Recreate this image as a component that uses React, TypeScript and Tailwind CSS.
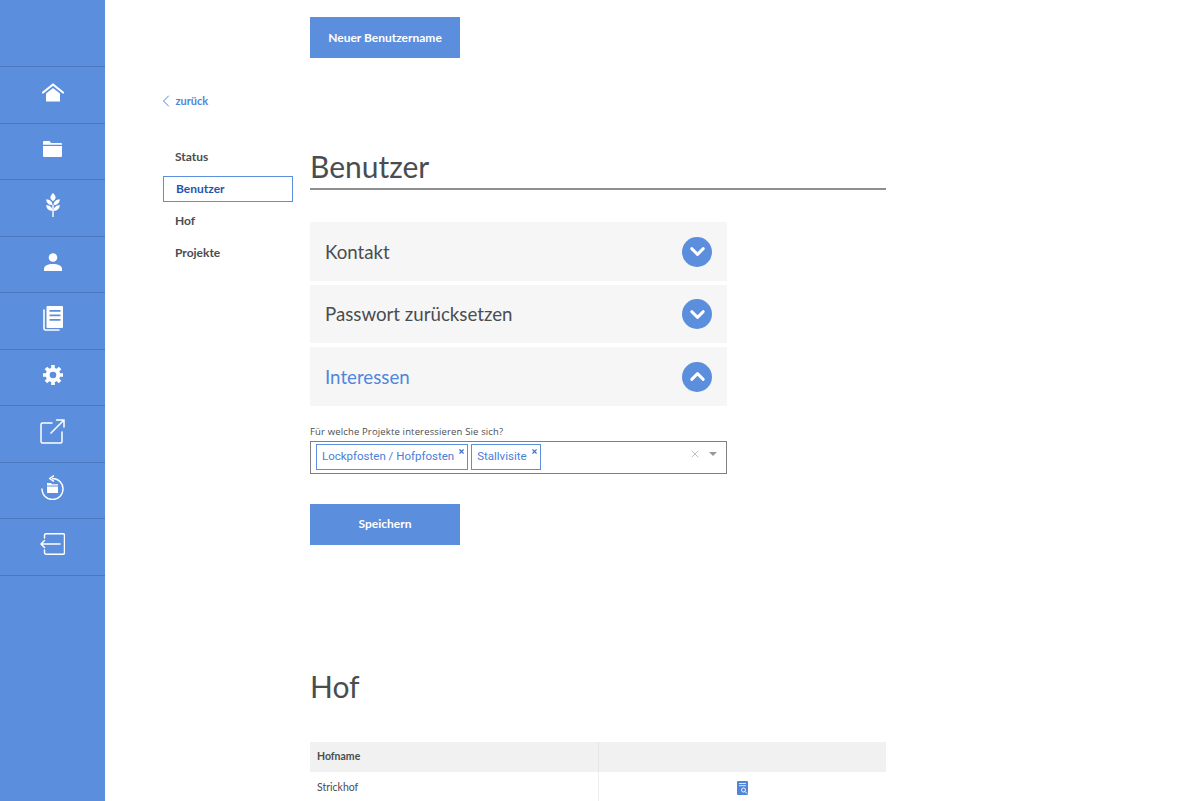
import { ChevronDown, ChevronLeft, ChevronUp, X } from "lucide-react";

function HomeIcon() {
  return (
    <svg width="22" height="19" viewBox="0 0 22 19" fill="none">
      <path d="M1 9.500 11 1.500l10 8" stroke="white" strokeWidth="2.200" strokeLinejoin="round" strokeLinecap="round" />
      <path d="M4 10.500 11 5l7 5.500V18.500H4z" fill="white" />
    </svg>
  );
}

function FolderIcon() {
  return (
    <svg width="19" height="16" viewBox="0 0 19 16" fill="white">
      <path d="M1 0h5.500l1.600 2H18a1 1 0 0 1 1 1v.8H0V1a1 1 0 0 1 1-1z" />
      <path d="M0 5h19v10a1 1 0 0 1-1 1H1a1 1 0 0 1-1-1z" />
    </svg>
  );
}

function WheatIcon() {
  return (
    <svg width="14" height="24" viewBox="0 0 14 24" fill="white">
      <path d="M7 0c1.800 1.700 2.600 3.200 2.600 4.500 0 1.400-1.100 2.600-2.600 3.700-1.500-1.100-2.600-2.300-2.600-3.700C4.400 3.200 5.200 1.700 7 0z" />
      <path d="M.2 6.200c3.600.3 6.300 2.200 6.300 6-3.800-.1-6.200-2.300-6.300-6z" />
      <path d="M13.800 6.200c-3.600.3-6.300 2.200-6.300 6 3.800-.1 6.200-2.300 6.300-6z" />
      <path d="M.2 12c3.600.3 6.300 2.200 6.300 6-3.800-.1-6.200-2.300-6.300-6z" />
      <path d="M13.800 12c-3.600.3-6.300 2.200-6.300 6 3.800-.1 6.200-2.300 6.300-6z" />
      <rect x="6.300" y="12" width="1.400" height="12" />
    </svg>
  );
}

function UserIcon() {
  return (
    <svg width="18" height="18" viewBox="0 0 18 18" fill="white">
      <circle cx="9" cy="4.500" r="4.300" />
      <path d="M0 18v-2.200C0 12.800 4 11 9 11s9 1.800 9 4.800V18z" />
    </svg>
  );
}

function NewsIcon() {
  return (
    <svg width="20" height="25" viewBox="0 0 20 25" fill="none">
      <path d="M1 4v18.500A1.500 1.500 0 0 0 2.500 24H16" stroke="white" strokeWidth="1.600" strokeLinecap="round" />
      <path
        fillRule="evenodd"
        clipRule="evenodd"
        fill="white"
        d="M4.500 0H19a1 1 0 0 1 1 1v20a1 1 0 0 1-1 1H4.500a1 1 0 0 1-1-1V1a1 1 0 0 1 1-1zM6.500 4v1.800h11V4zM6.500 8.500v1.800h11V8.500zM6.500 13v1.800h11V13z"
      />
    </svg>
  );
}

function GearIcon() {
  return (
    <svg width="20" height="20" viewBox="0 0 20 20" fill="none">
      <circle cx="10" cy="10" r="5.300" stroke="white" strokeWidth="4" />
      <path
        d="M10 0v20M0 10h20M2.900 2.900l14.200 14.200M17.100 2.900 2.900 17.100"
        stroke="white"
        strokeWidth="3.600"
        strokeDasharray="3.500 13"
      />
    </svg>
  );
}

function ExternalIcon() {
  return (
    <svg width="25" height="25" viewBox="0 0 25 25" fill="none" stroke="white" strokeWidth="1.500" strokeLinecap="round">
      <path d="M12 4H2.500A1.500 1.500 0 0 0 1 5.500v17A1.500 1.500 0 0 0 2.500 24h18a1.500 1.500 0 0 0 1.500-1.500V13" />
      <path d="M11 14 24 1M16.500 1H24v7" />
    </svg>
  );
}

function UndoFolderIcon() {
  return (
    <svg width="23" height="25" viewBox="0 0 23 25" fill="none">
      <path d="M11.500 3.500A10.500 10.500 0 1 1 1 14" stroke="white" strokeWidth="1.400" strokeLinecap="round" />
      <path d="M12.500.8 8.500 3.500l4 2.700" stroke="white" strokeWidth="1.400" strokeLinecap="round" strokeLinejoin="round" />
      <path d="M6 8h4l1 1.300h6v1.200H6z" fill="white" />
      <path d="M6 11.500h11V18H6z" fill="white" />
    </svg>
  );
}

function ExitIcon() {
  return (
    <svg width="25" height="22" viewBox="0 0 25 22" fill="none" stroke="white" strokeWidth="1.500" strokeLinecap="round" strokeLinejoin="round">
      <path d="M4.500 5V2.200A1.500 1.500 0 0 1 6 .8h17A1.500 1.500 0 0 1 24.500 2.200v17.600a1.500 1.500 0 0 1-1.500 1.400H6a1.500 1.500 0 0 1-1.500-1.400V17" />
      <path d="M20 11H1M4.500 7.500 1 11l3.500 3.500" />
    </svg>
  );
}

function ReportIcon() {
  return (
    <svg width="11" height="14" viewBox="0 0 11 14">
      <rect width="11" height="14" rx="1" fill="#4f86dc" />
      <path d="M2 2.500h7M2 4.700h7" stroke="white" strokeWidth="0.800" />
      <circle cx="6.500" cy="9" r="2" fill="none" stroke="white" strokeWidth="0.900" />
      <path d="M8 10.500 10 12.500" stroke="white" strokeWidth="1" />
    </svg>
  );
}

const navIcons = [
  <HomeIcon />,
  <FolderIcon />,
  <WheatIcon />,
  <UserIcon />,
  <NewsIcon />,
  <GearIcon />,
  <ExternalIcon />,
  <UndoFolderIcon />,
  <ExitIcon />,
];

function Accordion({ title, open }: { title: string; open?: boolean }) {
  return (
    <div className="flex h-[58.500px] items-center justify-between bg-[#f6f6f6] px-[15px] pt-[1px]">
      <span className={`text-[18.700px] ${open ? "text-[#4f86dc]" : "text-[#4a4d50]"}`}>{title}</span>
      <span className="flex h-[30px] w-[30px] items-center justify-center rounded-full bg-[#5b8edd] text-white">
        {open ? <ChevronUp size={23} strokeWidth={3} /> : <ChevronDown size={23} strokeWidth={3} />}
      </span>
    </div>
  );
}

function Tag({ label }: { label: string }) {
  return (
    <span className="relative flex h-[26px] items-center border border-[#5b8edd] pl-[5px] pr-[13px] font-['Roboto',sans-serif] text-[11.500px] text-[#4a80d8]">
      {label}
      <X size={7} strokeWidth={4} className="absolute right-[2px] top-[3px] text-[#3f74cf]" />
    </span>
  );
}

export default function App() {
  return (
    <div className="flex h-[801px] overflow-hidden bg-white font-['Lato',sans-serif] text-[#4a4d50]">
      <aside className="w-[105px] shrink-0 bg-[#5b8edd] pt-[66px]">
        {navIcons.map((icon, i) => (
          <div
            key={i}
            className="flex h-[56.500px] items-center justify-center border-t border-[#4a78bf] pb-[5px]"
          >
            {icon}
          </div>
        ))}
        <div className="border-t border-[#4a78bf]" />
      </aside>

      <nav className="ml-[58px] w-[130px] shrink-0 pt-[94px]">
        <a className="flex h-[14px] items-center text-[11px] font-bold text-[#4f86dc]">
          <ChevronLeft size={20} strokeWidth={1.200} className="-ml-[7.500px]" />
          zurück
        </a>
        <div className="mt-[36px] flex flex-col gap-[6px] text-[12px] font-bold">
          <div className="flex h-[26px] items-center pl-[12px]">Status</div>
          <div className="flex h-[26px] items-center border border-[#5b8edd] pl-[12px] text-[#1f56ae]">Benutzer</div>
          <div className="flex h-[26px] items-center pl-[12px]">Hof</div>
          <div className="flex h-[26px] items-center pl-[12px]">Projekte</div>
        </div>
      </nav>

      <main className="ml-[17px] w-[576px] shrink-0 pt-[17px]">
        <button className="h-[41px] w-[150px] bg-[#5b8edd] text-[12px] font-bold text-white">Neuer Benutzername</button>

        <h1 className="mt-[88px] border-b-2 border-[#8f8f8f] pb-[2px] text-[30px] leading-[40px]">Benutzer</h1>

        <div className="mt-[32px] flex w-[417px] flex-col gap-[4px]">
          <Accordion title="Kontakt" />
          <Accordion title="Passwort zurücksetzen" />
          <Accordion title="Interessen" open />
        </div>

        <label className="mt-[19px] block font-['Open_Sans',sans-serif] text-[9.500px] leading-[14px] tracking-[0.15px]">
          Für welche Projekte interessieren Sie sich?
        </label>
        <div className="mt-[2px] flex h-[33px] w-[417px] items-center gap-[3px] border border-[#808080] pl-[5px] pr-[9px]">
          <Tag label="Lockpfosten / Hofpfosten" />
          <Tag label="Stallvisite" />
          <X size={12} strokeWidth={1.300} className="mb-[6px] ml-auto text-[#9a9a9a]" />
          <span className="mb-[6px] ml-[5px] h-0 w-0 border-x-[4px] border-t-[4px] border-x-transparent border-t-[#999999]" />
        </div>

        <button className="mt-[30px] block h-[41px] w-[150px] bg-[#5b8edd] text-[12px] font-bold text-white">Speichern</button>

        <h2 className="mt-[121px] text-[30px] leading-[40px]">Hof</h2>

        <div className="mt-[36px] grid grid-cols-[289px_287px] text-[10.500px]">
          <div className="flex h-[30px] items-center border-r border-[#e6e6e6] bg-[#f1f1f1] pl-[7px] pt-[1px] font-bold">Hofname</div>
          <div className="bg-[#f1f1f1]" />
          <div className="flex h-[32px] items-center border-r border-[#eeeeee] pl-[7px] pt-[1px]">Strickhof</div>
          <div className="flex items-center justify-center">
            <ReportIcon />
          </div>
        </div>
      </main>
    </div>
  );
}
